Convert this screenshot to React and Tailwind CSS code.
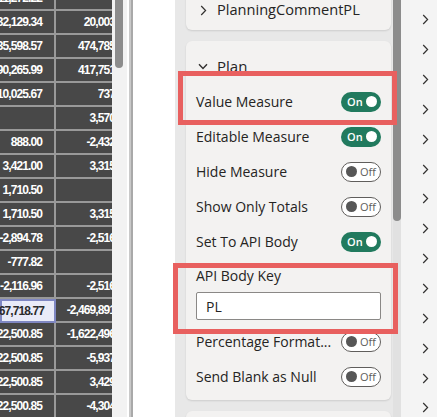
import React from "react";

const rows = [
  ["11,272.22", ""],
  ["132,129.34", "20,003.12"],
  ["135,598.57", "474,785.40"],
  ["190,265.99", "417,751.08"],
  ["110,025.67", "737.50"],
  ["", "3,570.00"],
  ["888.00", "-2,432.91"],
  ["3,421.00", "3,315.00"],
  ["1,710.50", ""],
  ["1,710.50", "3,315.00"],
  ["-2,894.78", "-2,516.36"],
  ["-777.82", ""],
  ["-2,116.96", "-2,516.36"],
  ["167,718.77", "-2,469,891.25", true],
  ["122,500.85", "-1,622,496.40"],
  ["122,500.85", "-5,937.20"],
  ["122,500.85", "3,429.84"],
  ["122,500.85", "-4,304.55"],
];

function ChevronRight({ className = "" }) {
  return (
    <svg width="7" height="11" viewBox="0 0 7 11" className={className}>
      <polyline points="1.2,1 5.6,5.5 1.2,10" fill="none" stroke="#323130" strokeWidth="1.2" />
    </svg>
  );
}

function ChevronDown() {
  return (
    <svg width="10" height="7" viewBox="0 0 10 7">
      <polyline points="1,1.2 5,5.4 9,1.2" fill="none" stroke="#323130" strokeWidth="1.4" />
    </svg>
  );
}

function Toggle({ on }) {
  if (on) {
    return (
      <div className="flex h-[20px] w-[40px] shrink-0 items-center justify-between rounded-full bg-[#217a5e] pl-[6px] pr-[4px]">
        <span className="text-[11px] font-semibold leading-none text-white">On</span>
        <span className="h-[11px] w-[11px] rounded-full bg-white" />
      </div>
    );
  }
  return (
    <div className="flex h-[20px] w-[40px] shrink-0 items-center gap-[3px] rounded-full border border-[#605e5c] bg-white pl-[4px]">
      <span className="h-[11px] w-[11px] rounded-full bg-[#575757]" />
      <span className="text-[11px] leading-none text-[#605e5c]">Off</span>
    </div>
  );
}

function ToggleRow({ label, on }) {
  return (
    <div className="flex h-[35px] items-center justify-between">
      <span className="text-[14px] text-[#252423]">{label}</span>
      <Toggle on={on} />
    </div>
  );
}

export default function App() {
  return (
    <div className="relative flex h-[417px] w-[437px] overflow-hidden bg-white font-['Open_Sans',sans-serif]">
      {/* data grid */}
      <div className="h-full w-[112px] shrink-0 overflow-hidden bg-[#484848] font-['Liberation_Sans',Arial,sans-serif]">
        <div className="mt-[-13px]">
          {rows.map(([a, b, sel], i) => (
            <div key={i} className="flex h-[24px]">
              <div
                className={
                  sel
                    ? "flex h-full w-[56px] shrink-0 items-center justify-end border-2 border-[#7f87c2] bg-[#e9ebf8] pr-[10px]"
                    : "flex h-full w-[56px] shrink-0 items-center justify-end border-b-2 border-r-2 border-[#999999] pr-[12px]"
                }
              >
                <span
                  className={
                    sel
                      ? "shrink-0 whitespace-nowrap text-[12px] font-bold tracking-[-0.9px] text-[#2b2b2b]"
                      : "shrink-0 whitespace-nowrap text-[12px] font-bold tracking-[-0.9px] text-white"
                  }
                >
                  {a}
                </span>
              </div>
              <div className="flex h-full w-[82px] shrink-0 items-center justify-end border-b-2 border-[#999999] pr-[9px]">
                <span className="shrink-0 whitespace-nowrap text-[12px] font-bold tracking-[-0.9px] text-white">{b}</span>
              </div>
            </div>
          ))}
        </div>
      </div>

      {/* grid scrollbar */}
      <div className="h-full w-[15px] shrink-0 bg-[#f2f2f2]">
        <div className="ml-[3px] h-[68px] w-[8px] rounded-b-full bg-[#8c8c8c]" />
      </div>
      <div className="h-full w-[2px] shrink-0 bg-white" />
      <div className="h-full w-[2px] shrink-0 bg-[#c9c9c9]" />
      <div className="h-full w-[2px] shrink-0 bg-[#a9a9a9]" />
      <div className="h-full w-[42px] shrink-0 bg-white" />

      {/* format pane */}
      <div className="flex h-full w-[218px] shrink-0 flex-col gap-[11px] bg-[#e8e8e8] pl-[11px] pr-[2px]">
        <div className="mt-[-10px] flex h-[40px] shrink-0 items-center rounded-[6px] bg-[#f3f2f1] pl-[14px] shadow-[0_1px_2px_rgba(0,0,0,0.12)]">
          <ChevronRight />
          <span className="ml-[10px] text-[14.6px] text-[#252423]">PlanningCommentPL</span>
        </div>

        <div className="shrink-0 rounded-[6px] bg-[#f3f2f1] px-[10px] pb-[6px] pt-[8px] shadow-[0_1px_2px_rgba(0,0,0,0.12)]">
          <div className="flex h-[35px] items-center pl-[2px]">
            <ChevronDown />
            <span className="ml-[9px] text-[15px] text-[#252423]">Plan</span>
          </div>
          <ToggleRow label="Value Measure" on />
          <ToggleRow label="Editable Measure" on />
          <ToggleRow label="Hide Measure" />
          <ToggleRow label="Show Only Totals" />
          <ToggleRow label="Set To API Body" on />
          <div className="pt-[7px] text-[14px] leading-[19px] text-[#252423]">API Body Key</div>
          <div className="mb-[4px] mt-[7px] flex h-[28px] items-center rounded-[2px] border border-[#8a8886] bg-white pl-[9px] text-[14px] text-[#252423]">
            PL
          </div>
          <ToggleRow label="Percentage Format..." />
          <ToggleRow label="Send Blank as Null" />
        </div>

        <div className="h-[40px] shrink-0 rounded-[6px] bg-[#f3f2f1] shadow-[0_1px_2px_rgba(0,0,0,0.12)]" />
      </div>

      {/* pane scrollbar */}
      <div className="h-full w-[8px] shrink-0 bg-[#e1e1e1]">
        <div className="h-[221px] w-full rounded-b-[4px] bg-[#8c8c8c]" />
      </div>

      {/* category rail */}
      <div className="flex h-full w-[36px] shrink-0 flex-col bg-[#f4f4f4] pl-[21px] pt-[5px]">
        {Array.from({ length: 14 }).map((_, i) => (
          <div key={i} className="flex h-[29.85px] shrink-0 items-center">
            <ChevronRight />
          </div>
        ))}
      </div>

      {/* highlight boxes */}
      <div className="pointer-events-none absolute left-[178px] top-[71px] h-[54px] w-[219px] border-[5px] border-[#e8605f]" />
      <div className="pointer-events-none absolute left-[173px] top-[263px] h-[71px] w-[225px] border-[5px] border-[#e8605f]" />
    </div>
  );
}
